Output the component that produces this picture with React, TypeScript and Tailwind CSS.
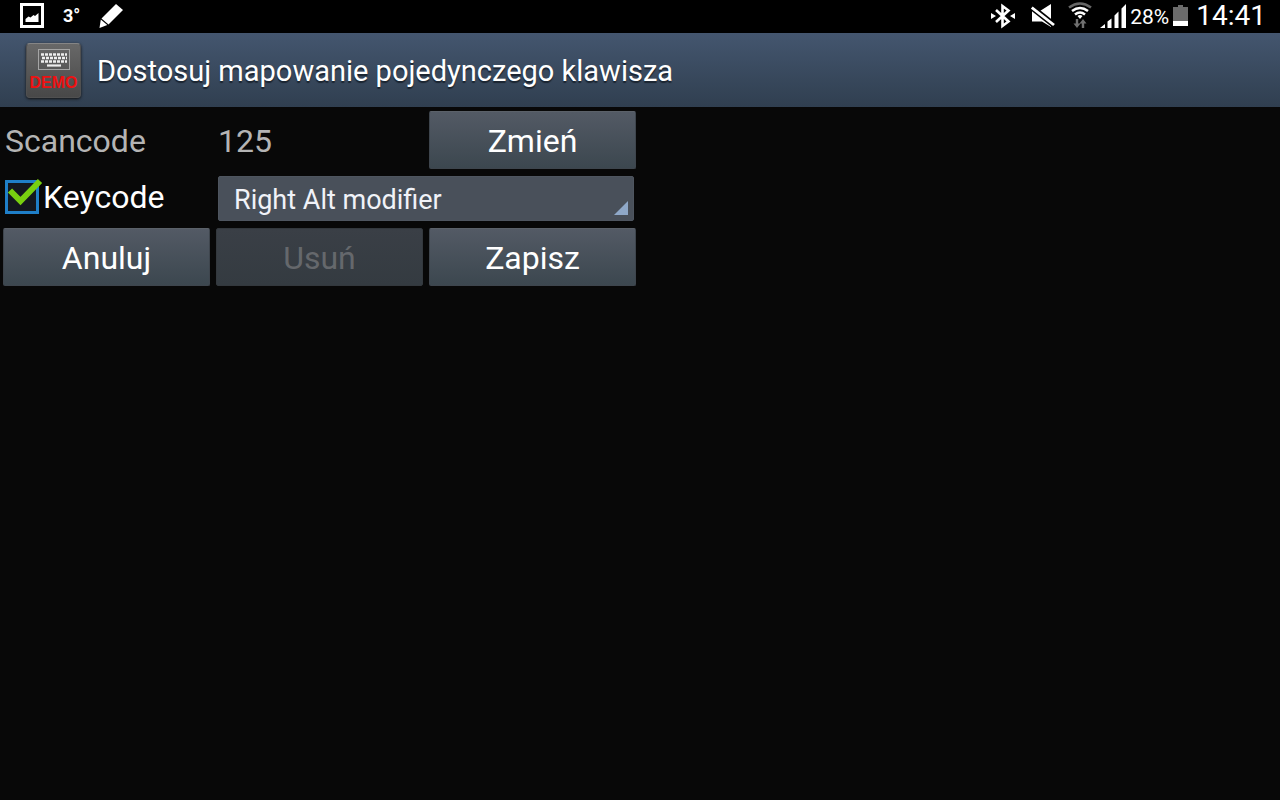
import { useState } from "react";
import type { ButtonHTMLAttributes } from "react";

function PictureIcon() {
  return (
    <svg width="24" height="25" viewBox="0 0 24 25" aria-hidden="true">
      <rect x="1.5" y="1.5" width="21" height="22" fill="none" stroke="#fff" strokeWidth="3" />
      <path d="M5.500 19v-3l3-2.500 2 1 3-2.500 1.500 1 3.500-3v9z" fill="#fff" />
    </svg>
  );
}

function PencilIcon() {
  return (
    <svg width="24" height="24" viewBox="0 0 24 24" fill="#fff" aria-hidden="true">
      <path d="M17 0l7 6L9.500 20.500 2.500 14.500z" />
      <path d="M1.800 15.500l6.500 5.500L0.500 24z" />
    </svg>
  );
}

function BluetoothIcon() {
  return (
    <svg width="24" height="26" viewBox="0 0 24 26" aria-hidden="true">
      <path d="M5 7L17.500 18.500 11.500 23V3l6 4.500L5 19" fill="none" stroke="#fff" strokeWidth="2.600" />
      <path d="M0 10l5 3-5 3zM24 10l-5 3 5 3z" fill="#fff" />
    </svg>
  );
}

function MutedIcon() {
  return (
    <svg width="24" height="24" viewBox="0 0 24 24" aria-hidden="true">
      <path d="M1 7h8l11-7v23L11 17.500H1z" fill="#fff" />
      <path d="M-1 2L25 22.500" stroke="#000" strokeWidth="6" />
      <path d="M0.800 3.500L23 21" stroke="#fff" strokeWidth="2.800" />
    </svg>
  );
}

function WifiIcon() {
  return (
    <svg width="24" height="27" viewBox="0 0 24 27" fill="none" aria-hidden="true">
      <path d="M1 5.500Q12-2.500 23 5.500" stroke="#666" strokeWidth="2.600" />
      <path d="M4 9q8-6 16 0M7 12.500q5-4 10 0" stroke="#fff" strokeWidth="2.600" />
      <path d="M9.500 14q2.500-2 5 0L12 17z" fill="#fff" />
      <path d="M9 17v6M15 26v-6" stroke="#707070" strokeWidth="2.400" />
      <path d="M5.500 21.500h7L9 26zM11.500 21.500h7L15 17z" fill="#707070" />
    </svg>
  );
}

function SignalIcon() {
  return (
    <svg width="26" height="24" viewBox="0 0 26 24" fill="#fff" aria-hidden="true">
      <path d="M0 24l5-4v4zM7.500 17.500l4-3V24h-4zM14.500 11.500l4-4V24h-4zM21.500 4.500L26 0v24h-4.500z" />
    </svg>
  );
}

function BatteryIcon() {
  return (
    <svg width="15" height="21" viewBox="0 0 15 21" aria-hidden="true">
      <path d="M5 0h5v2h5v19H0V2h5z" fill="#6b6b6b" />
      <path d="M0 16h15v5H0z" fill="#fff" />
    </svg>
  );
}

function KeyboardIcon() {
  return (
    <svg width="32" height="21" viewBox="0 0 32 21" fill="none" aria-hidden="true">
      <rect x="0.5" y="0.5" width="31" height="20" stroke="#a5a5a5" />
      <path d="M3 5.500h26M4 9h25M3 12.500h26" stroke="#eee" strokeWidth="2.400" strokeDasharray="3 1" />
      <path d="M9 16.500h14" stroke="#eee" strokeWidth="2.200" />
    </svg>
  );
}

function StatusBar() {
  return (
    <div className="flex h-[33px] items-center justify-between bg-black pb-0.5 pl-5 pr-[14px] text-white">
      <div className="flex items-center gap-[19px]">
        <PictureIcon />
        <span className="text-lg font-bold leading-8">3°</span>
        <PencilIcon />
      </div>
      <div className="flex items-center">
        <div className="flex items-center gap-4">
          <BluetoothIcon />
          <MutedIcon />
        </div>
        <div className="ml-[13px] flex items-center gap-2">
          <WifiIcon />
          <SignalIcon />
        </div>
        <span className="ml-1 pt-0.5 text-[21px] leading-8">28%</span>
        <span className="ml-1">
          <BatteryIcon />
        </span>
        <span className="ml-2 text-[28px] leading-8">14:41</span>
      </div>
    </div>
  );
}

function TitleBar() {
  return (
    <header className="flex h-[74px] items-center gap-4 bg-linear-to-b from-[#44566f] to-[#303f50] pl-[26px]">
      <div className="flex size-[55px] flex-col items-center rounded-sm border border-[#505050] border-t-[#858585] bg-linear-to-b from-[#686868] to-[#484848] pt-[5px] shadow-[0_1px_3px_#111]">
        <KeyboardIcon />
        <span className="mt-[3px] font-['Liberation_Sans',sans-serif] text-base font-bold leading-5 text-[#ee1111]">
          DEMO
        </span>
      </div>
      <h1 className="pt-0.5 text-[29px] leading-9 text-white text-shadow-[0_2px_1px_#1a2430]">
        Dostosuj mapowanie pojedynczego klawisza
      </h1>
    </header>
  );
}

function Button(props: ButtonHTMLAttributes<HTMLButtonElement>) {
  return (
    <button
      type="button"
      className="h-[58px] rounded-xs border border-[#3e454d] border-t-[#5b6169] bg-linear-to-b from-[#535a65] to-[#3c474f] pt-0.5 text-[32px] leading-10 text-white disabled:border-[#33383d] disabled:from-[#3a3f46] disabled:to-[#343b41] disabled:text-[#65686c]"
      {...props}
    />
  );
}

export default function App() {
  const [useKeycode, setUseKeycode] = useState(true);

  return (
    <div className="min-h-screen bg-[#080808] font-[Roboto,sans-serif]">
      <StatusBar />
      <TitleBar />
      <main className="grid w-1/2 grid-cols-3 items-center gap-x-1.5 gap-y-[7px] pl-[3px] pr-1 pt-1 text-[32px] leading-10">
        <span className="pl-0.5 pt-0.5 text-[#b4b4b4]">Scancode</span>
        <span className="pl-0.5 pt-0.5 text-[#b4b4b4]">125</span>
        <Button>Zmień</Button>

        <label className="flex items-center gap-1 pb-[3px] pl-0.5 text-white">
          <span className="relative">
            <input
              type="checkbox"
              checked={useKeycode}
              onChange={(e) => setUseKeycode(e.target.checked)}
              className="block size-[34px] appearance-none border-3 border-[#1f7fc8] bg-[#14181f]"
            />
            {useKeycode && (
              <svg
                className="pointer-events-none absolute left-0 -top-1"
                width="40"
                height="34"
                viewBox="0 0 40 34"
                aria-hidden="true"
              >
                <path d="M5 14.500l10.500 10.500L35 5" fill="none" stroke="#78d010" strokeWidth="6" />
              </svg>
            )}
          </span>
          Keycode
        </label>
        <div className="relative col-span-2 mx-0.5">
          <select
            aria-label="Keycode"
            className="block h-[45px] w-full appearance-none rounded-xs border border-[#4e555f] bg-[#49505a] pl-[15px] pt-0.5 text-[27px] leading-8 text-[#f0f2f8]"
          >
            <option>Right Alt modifier</option>
          </select>
          <svg
            className="pointer-events-none absolute bottom-1.5 right-1.5"
            width="14"
            height="14"
            viewBox="0 0 14 14"
            aria-hidden="true"
          >
            <path d="M14 0v14H0z" fill="#8fa8c8" />
          </svg>
        </div>

        <Button>Anuluj</Button>
        <Button disabled>Usuń</Button>
        <Button>Zapisz</Button>
      </main>
    </div>
  );
}
